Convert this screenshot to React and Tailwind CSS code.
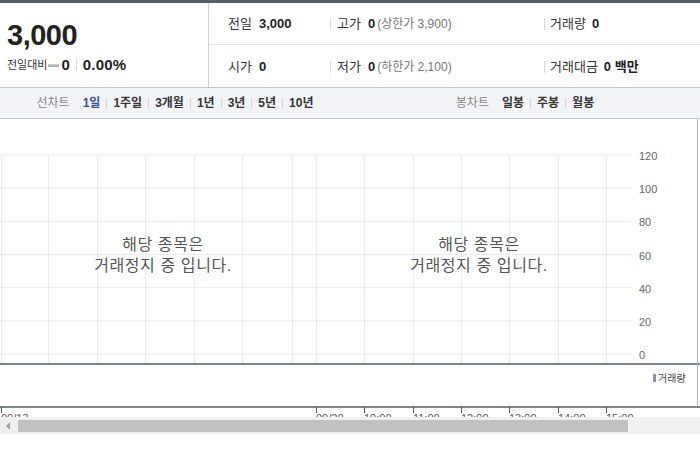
import React from 'react';

const FONT = { fontFamily: '"Liberation Sans", "Noto Sans CJK KR", sans-serif' };

const GRID_Y = [0, 1, 2, 3, 4, 5, 6].map((i) => 36 + i * 33.17);
const Y_LABELS = ['120', '100', '80', '60', '40', '20', '0'];
const GRID_X = [1, 48, 97, 145, 194, 242, 292, 316, 364, 413, 461, 509, 558, 606];
const TIME_TICKS = [
  { x: 1, label: '09/13' },
  { x: 316, label: '09/20' },
  { x: 364, label: '10:00' },
  { x: 413, label: '11:00' },
  { x: 461, label: '12:00' },
  { x: 509, label: '13:00' },
  { x: 558, label: '14:00' },
  { x: 606, label: '15:00' },
];

const Sep = () => <span className="mx-[6px] h-[11px] w-px bg-[#d6d6d6]" />;

const PriceRow = ({ cells, bordered }) => (
  <div className={`flex h-[42px] items-center pt-px text-[13px] text-[#333] ${bordered ? 'border-b border-[#e4e4e4]' : ''}`}>
    <div className="flex w-[121px] items-center pl-[19px]">
      <span>{cells[0].label}</span>
      <span className="ml-[7px] font-bold text-[#222]">{cells[0].value}</span>
    </div>
    <div className="flex w-[214px] items-center">
      <span className="h-[12px] w-px bg-[#d8d8d8]" />
      <span className="ml-[6px]">{cells[1].label}</span>
      <span className="ml-[7px] font-bold text-[#222]">{cells[1].value}</span>
      <span className="ml-[2px] text-[12px] text-[#777]">{cells[1].extra}</span>
    </div>
    <div className="flex items-center">
      <span className="h-[12px] w-px bg-[#d8d8d8]" />
      <span className="ml-[5px]">{cells[2].label}</span>
      <span className="ml-[6px] font-bold text-[#222]">{cells[2].value}</span>
    </div>
  </div>
);

const TabGroup = ({ title, items, active }) => (
  <div className="flex w-[350px] items-center justify-center text-[12px]">
    <span className="mr-[13px] text-[#888]">{title}</span>
    {items.map((item, i) => (
      <React.Fragment key={item}>
        {i > 0 && <Sep />}
        <span className={`font-bold ${item === active ? 'text-[#2f4ea3]' : 'text-[#333]'}`}>{item}</span>
      </React.Fragment>
    ))}
  </div>
);

const HaltNotice = ({ left }) => (
  <div
    className="absolute top-[115px] w-[200px] text-center text-[16px] leading-[21px] tracking-[0.6px] text-[#555]"
    style={{ left }}
  >
    해당 종목은
    <br />
    거래정지 중 입니다.
  </div>
);

export default function App() {
  return (
    <div className="relative h-[450px] w-[700px] overflow-hidden bg-white" style={FONT}>
      {/* top strip */}
      <div className="h-[3px] bg-[#5a5e67]" />

      {/* price header */}
      <div className="flex h-[85px] border-b border-[#c4c7cd]">
        <div className="flex w-[209px] flex-col border-r border-[#cfd1d4] pl-[7px] pt-[16px]">
          <div className="text-[29px] font-bold leading-[32px] tracking-[-0.5px] text-[#222]">3,000</div>
          <div className="mt-[3px] flex items-center">
            <span className="text-[11px] text-[#333]">전일대비</span>
            <span className="ml-[1px] h-[3px] w-[11px] bg-gradient-to-b from-[#d0d0d0] to-[#a8a8a8]" />
            <span className="ml-[2px] text-[15px] font-bold text-[#222]">0</span>
            <span className="mx-[6px] h-[12px] w-px bg-[#d8d8d8]" />
            <span className="text-[15px] font-bold tracking-[0.2px] text-[#222]">0.00%</span>
          </div>
        </div>
        <div className="flex flex-1 flex-col">
          <PriceRow
            bordered
            cells={[
              { label: '전일', value: '3,000' },
              { label: '고가', value: '0', extra: '(상한가 3,900)' },
              { label: '거래량', value: '0' },
            ]}
          />
          <PriceRow
            cells={[
              { label: '시가', value: '0' },
              { label: '저가', value: '0', extra: '(하한가 2,100)' },
              { label: '거래대금', value: '0 백만' },
            ]}
          />
        </div>
      </div>

      {/* chart type tabs */}
      <div className="flex h-[31px] border-b border-[#c9ccd2] bg-[#f3f4f7]">
        <TabGroup title="선차트" items={['1일', '1주일', '3개월', '1년', '3년', '5년', '10년']} active="1일" />
        <TabGroup title="봉차트" items={['일봉', '주봉', '월봉']} />
      </div>

      {/* chart canvas */}
      <div className="relative h-[298px]">
        <svg width="700" height="298" className="block">
          {GRID_Y.map((y) => (
            <line key={y} x1="0" x2="631" y1={y} y2={y} stroke="#ebebeb" strokeWidth="1" />
          ))}
          {GRID_X.map((x) => (
            <line key={x} x1={x + 0.5} x2={x + 0.5} y1="36" y2="245" stroke="#ebebeb" strokeWidth="1" />
          ))}
          {Y_LABELS.map((t, i) => (
            <text key={t} x="639" y={GRID_Y[i] + 5} fontSize="11" fill="#666" fontFamily="Liberation Sans, sans-serif">
              {t}
            </text>
          ))}
          <line x1="0" x2="700" y1="245" y2="245" stroke="#7f848b" strokeWidth="2" />
          <line x1="697.5" x2="697.5" y1="0" y2="288" stroke="#b4b4b4" strokeWidth="1" />
          <rect x="653" y="255" width="3" height="8" fill="#9b86c6" />
          <text x="658" y="263" fontSize="10" fill="#444" fontFamily="Noto Sans CJK KR, sans-serif">
            거래량
          </text>
          <line x1="0" x2="700" y1="288" y2="288" stroke="#7f848b" strokeWidth="2" />
          {TIME_TICKS.map((t) => (
            <g key={t.label}>
              <line x1={t.x + 0.5} x2={t.x + 0.5} y1="288" y2="294" stroke="#555" strokeWidth="1" />
              <text x={t.x} y="303" fontSize="11" fill="#555" fontFamily="Liberation Sans, sans-serif">
                {t.label}
              </text>
            </g>
          ))}
        </svg>
        <HaltNotice left={63} />
        <HaltNotice left={379} />
      </div>

      {/* horizontal scrollbar */}
      <div className="flex h-[17px] items-center bg-[#f0f0f0]">
        <div className="ml-[6px] mr-[8px] h-0 w-0 border-y-[4px] border-r-[4px] border-y-transparent border-r-[#a3a3a3]" />
        <div className="h-[12px] w-[610px] bg-[#c1c1c1]" />
      </div>
    </div>
  );
}
